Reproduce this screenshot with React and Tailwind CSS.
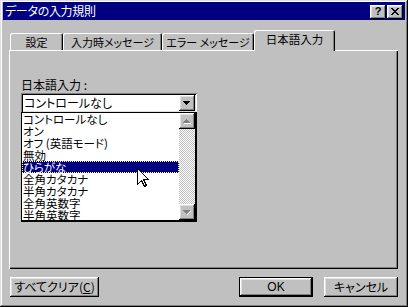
import React from 'react';

const raised = 'shadow-[inset_-1px_-1px_#000,inset_1px_1px_#fff,inset_-2px_-2px_#808080,inset_2px_2px_#dfdfdf]';

const items = [
  'コントロールなし',
  'オン',
  'オフ (英語モード)',
  '無効',
  'ひらがな',
  '全角カタカナ',
  '半角カタカナ',
  '全角英数字',
  '半角英数字',
];

function Arrow({ up, disabled }) {
  const fill = disabled ? '#808080' : '#000';
  return (
    <svg width="8" height="5" viewBox="0 0 8 5" shapeRendering="crispEdges">
      {up ? (
        <>
          {disabled && <path d="M1 4h7v1H1z" fill="#fff" />}
          <path d="M3 0h1v1h1v1h1v1h1v1H0V3h1V2h1V1h1z" fill={fill} />
        </>
      ) : (
        <>
          {disabled && <path d="M4 4h1V3h1V2h1V1h1v1H7v1H6v1H5v1H4z" fill="#fff" />}
          <path d="M0 0h7v1H6v1H5v1H4v1H3V3H2V2H1V1H0z" fill={fill} />
        </>
      )}
    </svg>
  );
}

function Tab({ label, width, active }) {
  if (active) {
    return (
      <div
        className="relative top-[1px] z-10 h-[21px] bg-[#c0c0c0] rounded-t-[2px] flex items-start justify-center pt-[3px] text-[11.5px] shadow-[inset_1px_1px_#fff,inset_-1px_0_#000,inset_-2px_0_#808080]"
        style={{ width }}
      >
        {label}
      </div>
    );
  }
  return (
    <div
      className="h-[17px] rounded-t-[2px] flex items-start justify-center pt-[3px] text-[11px] whitespace-nowrap shadow-[inset_1px_1px_#fff,inset_-1px_0_#000,inset_-2px_0_#808080]"
      style={{ width }}
    >
      {label}
    </div>
  );
}

function Button({ children, isDefault }) {
  if (isDefault) {
    return (
      <div className="w-[74px] h-[20px] border border-black">
        <div className={`w-full h-full flex items-center justify-center ${raised}`}>{children}</div>
      </div>
    );
  }
  return <div className={`h-[20px] flex items-center justify-center ${raised}`}>{children}</div>;
}

export default function App() {
  return (
    <div className="relative w-[408px] h-[307px] bg-[#c0c0c0] pt-[2px] px-[3px] text-[12px] leading-[12px] text-black [font-family:'Noto_Sans_CJK_JP',sans-serif] [font-feature-settings:'palt'] shadow-[inset_-1px_-1px_#000,inset_1px_1px_#dfdfdf,inset_-2px_-2px_#808080,inset_2px_2px_#fff] overflow-hidden">
      {/* title bar */}
      <div className="h-[18px] bg-[#000080] flex items-center justify-between pl-[2px] pr-[2px]">
        <span className="text-white tracking-[-0.3px]">データの入力規則</span>
        <div className="flex gap-[1px] mt-[1px]">
          <div className={`w-[16px] h-[14px] bg-[#c0c0c0] flex items-center justify-center ${raised}`}>
            <span className="[font-family:'Liberation_Sans',sans-serif] font-bold text-[11px] leading-[11px] -mt-[1px]">?</span>
          </div>
          <div className={`w-[16px] h-[14px] bg-[#c0c0c0] flex items-center justify-center ${raised}`}>
            <svg width="8" height="7" viewBox="0 0 8 7" shapeRendering="crispEdges">
              <path d="M0 0h2v1h1v1h2V1h1V0h2v1H7v1H6v1H5v1h1v1h1v1h1v1H6V6H5V5H3v1H2v1H0V6h1V5h1V4h1V3H2V2H1V1H0z" fill="#000" />
            </svg>
          </div>
        </div>
      </div>

      {/* tabs */}
      <div className="mt-[10px] h-[20px] flex items-end pl-[7px]">
        <Tab label="設定" width={53} />
        <Tab label="入力時メッセージ" width={99} />
        <Tab label="エラー メッセージ" width={92} />
        <Tab label="日本語入力" width={81} active />
      </div>

      {/* panel */}
      <div className="ml-[6px] w-[389px] h-[219px] shadow-[inset_1px_1px_#fff,inset_-1px_-1px_#000,inset_-2px_-2px_#808080] pl-[12px] pt-[29px]">
        <div>日本語入力 :</div>
        <div className="relative mt-[2px] w-[176px] h-[20px] bg-white shadow-[inset_1px_1px_#808080,inset_-1px_-1px_#fff,inset_2px_2px_#000,inset_-2px_-2px_#dfdfdf] flex items-center pl-[2px] pr-[2px]">
          <span className="flex-1 pl-[1px]">コントロールなし</span>
          <div className={`w-[16px] h-[16px] bg-[#c0c0c0] flex items-center justify-center ${raised}`}>
            <Arrow />
          </div>

          {/* dropdown list */}
          <div className="absolute left-0 top-[19px] w-[176px] h-[110px] bg-white border-l border-t border-r-2 border-b-2 border-black flex z-20 text-[11.5px]">
            <div className="flex-1 flex flex-col overflow-hidden">
              {items.map((item, i) =>
                i === 4 ? (
                  <div
                    key={item}
                    className="h-[12px] shrink-0 leading-[10px] bg-[#000080] text-white border border-dotted border-[#ffff80]"
                  >
                    {item}
                  </div>
                ) : (
                  <div key={item} className="h-[12px] shrink-0 leading-[12px] pl-[1px]">
                    {item}
                  </div>
                )
              )}
            </div>
            <div className="w-[16px] flex flex-col bg-[image:repeating-conic-gradient(#fff_0_25%,#c0c0c0_0_50%)] bg-[size:2px_2px]">
              <div className={`h-[16px] bg-[#c0c0c0] flex items-center justify-center ${raised}`}>
                <Arrow up disabled />
              </div>
              <div className="flex-1" />
              <div className={`h-[16px] bg-[#c0c0c0] flex items-center justify-center ${raised}`}>
                <Arrow disabled />
              </div>
            </div>
          </div>
        </div>
      </div>

      {/* buttons */}
      <div className="mt-[8px] px-[7px] flex items-center">
        <div className="w-[89px]">
          <Button>
            すべてクリア(<span className="underline">C</span>)
          </Button>
        </div>
        <div className="flex-1" />
        <Button isDefault>
          <span className="[font-family:'Liberation_Sans',sans-serif]">OK</span>
        </Button>
        <div className="w-[74px] ml-[11px]">
          <Button>キャンセル</Button>
        </div>
      </div>

      {/* mouse pointer */}
      <svg
        className="absolute left-[137px] top-[168px] z-30"
        width="13"
        height="20"
        viewBox="0 0 13 20"
        shapeRendering="crispEdges"
      >
        <polygon points="0.5,0.5 0.5,16.5 4.5,12.5 7.5,18.5 9.5,17.5 6.5,11.5 11.5,11.5" fill="#fff" stroke="#000" />
      </svg>
    </div>
  );
}
